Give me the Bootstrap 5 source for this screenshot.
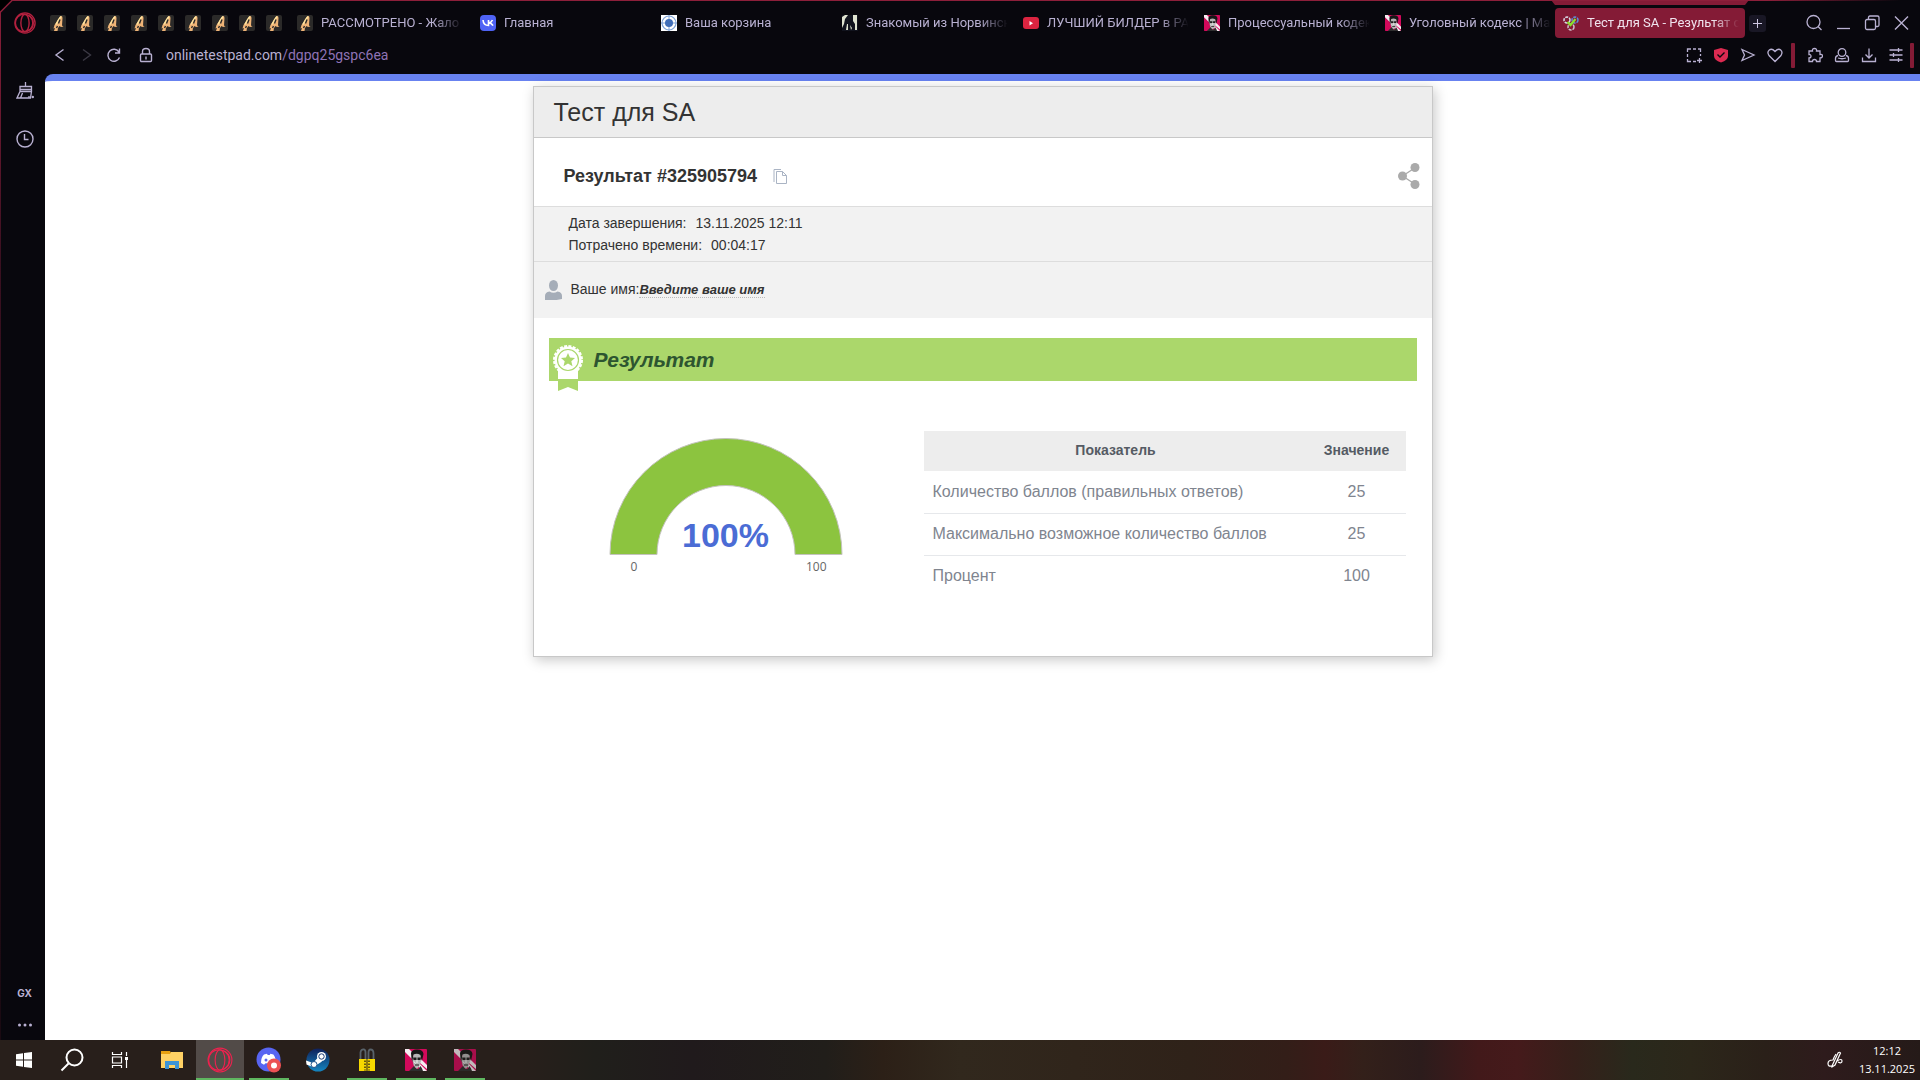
<!DOCTYPE html>
<html lang="ru">
<head>
<meta charset="utf-8">
<meta name="viewport" content="width=device-width, initial-scale=1">
<title>Тест для SA - Результат</title>
<link href="https://cdn.jsdelivr.net/npm/bootstrap@5.3.0/dist/css/bootstrap.min.css" rel="stylesheet">
<style>
  body { font-family: "Liberation Sans", Arial, sans-serif; background: #08070d; color: #333; overflow: hidden; }
  svg { display: block; flex: none; }
  a { text-decoration: none; color: inherit; }
  button { font: inherit; }
  .plain-btn { background: none; border: 0; padding: 0; color: inherit; }

  /* browser frame */
  .browser-frame { background: #08070d; color: #b9b1d2; font-family: Roboto, sans-serif; }
  .frame-line { inset: 0 0 auto 0; height: 1px; background: linear-gradient(90deg, #8d1f3a 92%, #08070d 99%); z-index: 3; }
  .frame-side { inset: 0 auto 40px 0; width: 1px; background: linear-gradient(#8d1f3a, #3a1020 25%, #1a0a12); z-index: 3; }
  .frame-corner { left: 0; top: 0; z-index: 4; }
  .opera-slot { width: 50px; }
  .tab-strip { height: 38px; padding-top: 8px; }
  .pin-tabs { gap: 11px; }
  .tab-item { flex: 0 1 181px; min-width: 0; height: 30px; gap: 8px; padding: 0 8px; }
  .tab-first { margin-left: 7px; flex-basis: 183px; }
  .tab-text { overflow: hidden; white-space: nowrap; -webkit-mask-image: linear-gradient(90deg, #000 112px, transparent 142px); mask-image: linear-gradient(90deg, #000 112px, transparent 142px); font-size: 13px; line-height: 20px; flex: 1 1 0; }
  .tab-active { flex-basis: 190px; background: #841b36; color: #f0e3ee; border-radius: 4px; margin-left: -3px; padding-right: 6px; }
  .tab-active .tab-text { -webkit-mask-image: linear-gradient(90deg, #000 126px, transparent 152px); mask-image: linear-gradient(90deg, #000 126px, transparent 152px); }
  .tab-notch { left: -4px; top: -8px; }
  .new-tab { width: 17px; height: 17px; background: #191725; border-radius: 3px; margin-left: 4px; }
  .win-btns { gap: 11px; padding-right: 10px; }
  .addr-row { height: 36px; padding: 0 6px 2px 52px; }
  .addr-text { font-size: 14px; line-height: 20px; }
  .addr-path { color: #8f73b5; }
  .nav-btns, .ext-btns { gap: 11px; }
  .ext-tools { margin: 0 6px 0 12px; }
  .ext-split { width: 4px; height: 25px; background: #841b36; border-radius: 1px; }
  .side-rail { width: 45px; padding: 8px 0 7px 4px; color: #b9b1d2; }
  .gx-text { font: 700 10px/16px Inter, sans-serif; }

  /* page */
  .site-view { background: #fff; border-top: 7px solid #6882f0; border-top-left-radius: 8px; padding-top: 5px; }
  .test-card { width: 900px; max-width: 100%; border: 1px solid #c8c8c8; box-shadow: 2px 3px 12px rgba(0,0,0,.22); background: #fff; }
  .test-head { background: #ededed; border-bottom: 1px solid #c8c8c8; padding: 0 20px; height: 51px; }
  .test-title { font-size: 25px; line-height: 50px; margin: 0; font-weight: 400; }
  .result-row { padding: 8px 12px 0 30px; height: 68px; }
  .result-num { font-size: 18px; line-height: 30px; font-weight: 700; margin: 0; }
  .info-band { background: #f2f2f2; border-top: 1px solid #ddd; font-size: 14px; line-height: 22px; padding: 5px 35px; }
  .info-val { margin-left: 9px; }
  .name-band { background: #f2f2f2; border-top: 1px solid #ddd; font-size: 14px; padding: 0 11px 1px; height: 57px; }
  .name-label { margin-left: 9px; }
  .name-input { border: 0; border-bottom: 1px dotted #bbb; background: none; padding: 0; width: 126px; font: italic 700 13px/16px "Liberation Sans", Arial, sans-serif; color: #333; height: 17px; }
  .name-input::placeholder { color: #333; opacity: 1; }
  .ribbon-bar { background: #abd76b; height: 43px; margin: 20px 15px 0; padding-left: 4px; color: #2d5530; }
  .ribbon-title { font: italic 700 21px/43px "Liberation Sans", Arial, sans-serif; margin: 0 0 0 11px; }
  .ribbon-icon { margin-top: 7px; }
  .result-body { padding: 50px 26px 59px 75px; }
  .gauge-box { margin-top: 5px; }
  .gauge-labels { font: 12px/16px "Open Sans", sans-serif; color: #666; width: 234px; padding: 3px 16px 0 22px; }
  .gauge-value { inset: auto 0 1px 0; font-size: 34px; line-height: 40px; font-weight: 700; color: #4b6cd5; text-align: center; }
  .score-table { width: 482px; color: #80858f; font-size: 16px; margin: 0; }
  .score-table th { background: #ededed; color: #555b64; font-size: 14px; line-height: 20px; height: 40px; padding: 0 7px 2px 9px; text-align: center; vertical-align: middle; border: 0; }
  .score-table td { height: 42px; padding: 0 7px 0 9px; vertical-align: middle; border-bottom: 1px solid #e6e8eb; line-height: 24px; }
  .score-table tbody tr:last-child td { border-bottom: 0; }
  .val-col { width: 100px; }

  /* taskbar */
  .task-bar { height: 40px; color: #fff; background: linear-gradient(90deg, #281f1b 0%, #281f1b 27%, #201f1b 31%, #201a1c 36%, #211e1a 43%, #2c2017 46%, #31281d 50%, #2f2219 62%, #331e18 67%, #3a1b18 69%, #33201a 71%, #2c1c1c 74%, #42191a 77%, #451a1b 79%, #35201a 82%, #29291c 85%, #2c271a 88%, #2a2019 92%, #2e1b1c 95%, #251a18 100%); }
  .task-btn { width: 48px; height: 40px; border: 0; padding: 0; background: none; display: flex; align-items: center; justify-content: center; }
  .task-btn.is-open { width: 40px; margin: 0 4px 0 5px; box-shadow: inset 0 -2px #5fb760; }
  .task-btn.is-front { background: #524b48; box-shadow: inset 0 -2px #5fb760; }
  .task-btn.is-pinned { margin-left: 1px; }
  .task-clock { font: 11px/18px "Open Sans", sans-serif; text-align: center; margin-right: 5px; }
</style>
</head>
<body>
<svg width="0" height="0" class="position-absolute" aria-hidden="true">
  <defs>
    <symbol id="i-opera" viewBox="0 0 24 24"><g fill="none" stroke="currentColor"><circle cx="12" cy="12" r="11"/><circle cx="11" cy="12" r="9.500"/><ellipse cx="12" cy="12" rx="4.500" ry="9.500"/><path d="M15 3.500a9 9 0 0 1 0 17"/></g></symbol>
    <symbol id="i-rocket" viewBox="0 0 16 16"><rect width="16" height="16" rx="2" fill="#2b2a29"/><path d="M10 1.500 12 1l.5 2-.5 7.500 1.500 1-2.500.5-1.500-1L8 13l-.5 3H4l1-3-1.500.5L4.500 10 6.500 7z" fill="#efb477"/><path d="M11 1.500 8.500 5 6 9.500" stroke="#ffe6a0" stroke-width="1.500" fill="none"/><path d="M10 4.500 8.500 8.500M7.500 11l-1 2" stroke="#2b2a29" stroke-width="1.400"/></symbol>
    <symbol id="i-face" viewBox="0 0 22 22"><rect width="22" height="22" rx="1" fill="#d3095b"/><path d="M0 0h4l4 4-1 6-7-7zM15 9l7 7v4l-7-6zM14 14l8 8h-5l-3-4z" fill="#f6ecf1"/><path d="M6 4q1-4 6.500-3.500Q18 .5 18.500 5L17 12l-1.500-5-7-1-.5 7-1.500-3z" fill="#161616"/><path d="M8.500 5.500q3.500-1.500 7 .5l.5 6-1.500 5-2 2.500h-2L8.500 16 7.500 11z" fill="#b5b5b5"/><path d="M8 8.500h3.500V11H8.500zM12.500 8.500H16l-.5 2.500h-3zM10 15.500h4v1h-4z" fill="#1c1c1c"/><path d="M4 22l3-3 2-2 2.500 3h2l2-3 1.500 2.500 1 2.500z" fill="#2e2e2e"/><path d="M12 11v3M9 12.500l1.500 2" stroke="#f2f2f2" fill="none"/></symbol>
  </defs>
</svg>

<div class="vh-100 d-flex flex-column position-relative">
  <div class="browser-frame">
    <div class="frame-line position-absolute"></div>
    <div class="frame-side position-absolute"></div>
    <svg class="frame-corner position-absolute" width="13" height="13"><path d="M0 0H12L0 12z" fill="#000"/><path d="M0 12.500 12.500 0" stroke="#8d1f3a" stroke-width="1.500"/></svg>
    <div class="tab-strip d-flex align-items-center">
      <button class="plain-btn opera-slot d-flex justify-content-center" aria-label="Меню"><svg width="22" height="22" color="#b3213f" stroke-width="1.500"><use href="#i-opera"/></svg></button>
      <div class="pin-tabs d-flex">
        <svg width="16" height="16"><use href="#i-rocket"/></svg><svg width="16" height="16"><use href="#i-rocket"/></svg><svg width="16" height="16"><use href="#i-rocket"/></svg><svg width="16" height="16"><use href="#i-rocket"/></svg><svg width="16" height="16"><use href="#i-rocket"/></svg><svg width="16" height="16"><use href="#i-rocket"/></svg><svg width="16" height="16"><use href="#i-rocket"/></svg><svg width="16" height="16"><use href="#i-rocket"/></svg><svg width="16" height="16"><use href="#i-rocket"/></svg>
      </div>
      <a href="#" class="tab-item tab-first d-flex align-items-center"><svg width="16" height="16"><use href="#i-rocket"/></svg><span class="tab-text">РАССМОТРЕНО - Жало</span></a>
      <a href="#" class="tab-item d-flex align-items-center"><svg width="16" height="16"><rect width="16" height="16" rx="4" fill="#4f63f5"/><path d="M3 5q.5 5.500 5.500 5.500V5M8.500 8q3-.5 4-3M8.500 8q3 0 4.500 2.700" fill="none" stroke="#fff" stroke-width="1.600"/></svg><span class="tab-text">Главная</span></a>
      <a href="#" class="tab-item d-flex align-items-center"><svg width="16" height="16"><rect width="16" height="16" fill="#fff"/><circle cx="8" cy="8" r="7" fill="none" stroke="#7fa3d8" stroke-width="1.200"/><path d="M8 0v16M0 8h16" stroke="#7fa3d8"/><circle cx="8" cy="8" r="4" fill="#3f6db8"/></svg><span class="tab-text">Ваша корзина</span></a>
      <a href="#" class="tab-item d-flex align-items-center"><svg width="16" height="16"><rect width="16" height="16" fill="#11131d"/><path d="M0 2 3 0h3L3 4 2 9 0 13zM11 0h4v15h-2V9l-2-3zM5 9h1v6H4zM8 10l2 3-1 2z" fill="#dfe3d0"/></svg><span class="tab-text">Знакомый из Норвинск</span></a>
      <a href="#" class="tab-item d-flex align-items-center"><svg width="16" height="16"><rect y="2" width="16" height="12" rx="3" fill="#dc2440"/><path d="M6.500 6v4.500L10 8.200z" fill="#fff"/></svg><span class="tab-text">ЛУЧШИЙ БИЛДЕР в РА</span></a>
      <a href="#" class="tab-item d-flex align-items-center"><svg width="16" height="16"><use href="#i-face"/></svg><span class="tab-text">Процессуальный кодек</span></a>
      <a href="#" class="tab-item d-flex align-items-center"><svg width="16" height="16"><use href="#i-face"/></svg><span class="tab-text">Уголовный кодекс | Ма</span></a>
      <a href="#" class="tab-item tab-active d-flex align-items-center position-relative"><svg class="tab-notch position-absolute" width="198" height="5"><path d="M0 0h198l-4 5H4z" fill="#841b36"/></svg><svg width="16" height="16"><g fill="none" stroke-width="1.500" stroke-dasharray="3 1"><circle cx="4" cy="5" r="3" stroke="#d7dde8"/><circle cx="12" cy="5" r="3" stroke="#5d8fd8"/><circle cx="8" cy="12" r="3" stroke="#cfc2cf"/></g><path d="M4.500 7 7.500 10 12.500 4" stroke="#8be02c" stroke-width="2.200" fill="none"/></svg><span class="tab-text">Тест для SA - Результат с</span></a>
      <button class="plain-btn new-tab d-flex align-items-center justify-content-center" aria-label="Новая вкладка"><svg width="11" height="11"><path d="M5.500 1v9M1 5.500h9" stroke="#cfc8e4"/></svg></button>
      <div class="win-btns d-flex ms-auto">
        <button class="plain-btn" aria-label="Поиск"><svg width="18" height="18" fill="none" stroke="currentColor" stroke-width="1.300"><circle cx="8.500" cy="8" r="6.500"/><path d="m13 12.500 3.500 3.500"/></svg></button>
        <button class="plain-btn" aria-label="Свернуть"><svg width="18" height="18" stroke="currentColor" stroke-width="1.300"><path d="M3 14.500h13"/></svg></button>
        <button class="plain-btn" aria-label="Развернуть"><svg width="18" height="18" fill="none" stroke="currentColor" stroke-width="1.300"><rect x="2.500" y="5.500" width="10" height="10" rx="1.500"/><path d="M5.500 5.500v-2q0-1.500 1.500-1.500h7.500q1.500 0 1.500 1.500V11q0 1.500-1.500 1.500h-2"/></svg></button>
        <button class="plain-btn" aria-label="Закрыть"><svg width="18" height="18" stroke="currentColor" stroke-width="1.400"><path d="m3 2.500 13 13m0-13-13 13"/></svg></button>
      </div>
    </div>
    <div class="addr-row d-flex align-items-center">
      <div class="nav-btns d-flex">
        <button class="plain-btn" aria-label="Назад"><svg width="16" height="16" fill="none" stroke="currentColor" stroke-width="1.400"><path d="M11.500 2.500 4 8l7.500 5.500"/></svg></button>
        <button class="plain-btn" aria-label="Вперёд"><svg width="16" height="16" fill="none" stroke="#3b3944" stroke-width="1.400"><path d="M4 2.500 11.500 8 4 13.500"/></svg></button>
        <button class="plain-btn" aria-label="Обновить"><svg width="16" height="16" fill="none" stroke="currentColor" stroke-width="1.400"><path d="M13.500 10.500A6 6 0 1 1 13 5M13.500 1.500V6H9"/></svg></button>
      </div>
      <svg class="ms-3" width="16" height="16" fill="none" stroke="currentColor" stroke-width="1.400"><rect x="2.500" y="7" width="11" height="7.500" rx="1"/><path d="M4.500 7V4.500Q4.500 1.500 8 1.500t3.500 3V7M8 9.500v3"/></svg>
      <span class="addr-text ms-2 ps-1">onlinetestpad.com<span class="addr-path">/dgpq25gspc6ea</span></span>
      <div class="ext-btns d-flex ms-auto">
        <button class="plain-btn" aria-label="Снимок"><svg width="16" height="16" fill="none" stroke="currentColor" stroke-width="1.300"><path d="M1.500 5V2H5M7 2h3M12 2h2.500v3M14.500 7v2M1.500 7v3M1.500 12v2.500H5M7 14.500h3M11 13.500h5M13.500 11v5"/></svg></button>
        <button class="plain-btn" aria-label="Защита"><svg width="16" height="16"><path d="M1 3 8 1l7 2v6q0 4-7 6.500Q1 13 1 9z" fill="#dd2a51"/><path d="m4.500 7.500 2.500 2.500 4.500-4.500" fill="none" stroke="#08070d" stroke-width="1.400"/></svg></button>
        <button class="plain-btn" aria-label="Отправить"><svg width="16" height="16" fill="none" stroke="currentColor" stroke-width="1.300"><path d="M2 2.500 14 8 2 13.500 4.500 8z"/></svg></button>
        <button class="plain-btn" aria-label="Избранное"><svg width="16" height="16" fill="none" stroke="currentColor" stroke-width="1.300"><path d="M8 14.500 2 8.500Q-.3 5 2.300 3T8 4.500Q11.300 1 13.700 3T14 8.500z"/></svg></button>
      </div>
      <div class="ext-split ms-2"></div>
      <div class="ext-btns ext-tools d-flex">
        <button class="plain-btn" aria-label="Расширения"><svg width="16" height="16" fill="none" stroke="currentColor" stroke-width="1.300"><path d="M2 4h3.500Q5 1.500 7.500 1.500T9.500 4H13v3.500q2.500-.5 2.500 1.500T13 11v3.500H9.500q0-2-2-2t-2 2H2V11q2 0 2-1.800T2 7.500z"/></svg></button>
        <button class="plain-btn" aria-label="Профиль"><svg width="16" height="16" fill="none" stroke="currentColor" stroke-width="1.300"><circle cx="8" cy="5.500" r="3.800"/><path d="M4 8.500q-2.500.5-2.500 3v2q0 1 1 1h11q1 0 1-1v-2q0-2.500-2.500-3M4 11q4 1.500 8 0"/></svg></button>
        <button class="plain-btn" aria-label="Загрузки"><svg width="16" height="16" fill="none" stroke="currentColor" stroke-width="1.300"><path d="M8 1.500v9M4.500 7.500 8 11l3.500-3.500M1.500 10.500v4h13v-4"/></svg></button>
        <button class="plain-btn" aria-label="Настройка"><svg width="16" height="16" fill="none" stroke="currentColor" stroke-width="1.300"><path d="M1.500 3h13M1.500 8h13M1.500 13h13M10.500 1v4M5.500 6v4M10.500 11v4"/></svg></button>
      </div>
      <div class="ext-split"></div>
    </div>
  </div>

  <div class="d-flex flex-grow-1">
    <nav class="side-rail d-flex flex-column align-items-center">
      <svg width="18" height="18" fill="none" stroke="currentColor" stroke-width="1.300"><path d="M9.500 0v4M4 4.500h11.500v5H4zM4 7.500h11.500M4 9.500 1 16h13.500l1-6.500M6.500 11l-2 5M13 14v2"/><circle cx="16.800" cy="15" r="1.200" fill="currentColor" stroke="none"/></svg>
      <svg class="mt-4" width="18" height="30" fill="none" stroke="currentColor" stroke-width="1.400"><circle cx="9" cy="15" r="8"/><path d="M8.500 10v5.500h4"/></svg>
      <span class="gx-text mt-auto">GX</span>
      <svg class="mt-3" width="16" height="16" fill="currentColor"><circle cx="2.500" cy="8" r="1.500"/><circle cx="8" cy="8" r="1.500"/><circle cx="13.500" cy="8" r="1.500"/></svg>
    </nav>
    <main class="site-view flex-grow-1">
      <div class="test-card mx-auto">
        <header class="test-head"><h1 class="test-title">Тест для SA</h1></header>
        <div class="result-row d-flex align-items-center">
          <h2 class="result-num">Результат #325905794</h2>
          <button class="plain-btn ms-3" aria-label="Копировать"><svg width="14" height="16" fill="none" stroke="#aab4c4"><path d="M3.500 3.500h6l4 4v8h-10zM9.500 3.500v4h4M1 14V1.500h7"/></svg></button>
          <button class="plain-btn ms-auto" aria-label="Поделиться"><svg width="22" height="28"><path d="M17.500 5.500 4.500 14l13 8.500" fill="none" stroke="#aaa" stroke-width="1.300"/><g fill="#aaa"><circle cx="17" cy="5.500" r="4.500"/><circle cx="4.500" cy="14" r="4.500"/><circle cx="17" cy="22.500" r="4.500"/></g></svg></button>
        </div>
        <div class="info-band">
          <div>Дата завершения:<span class="info-val">13.11.2025 12:11</span></div>
          <div>Потрачено времени:<span class="info-val">00:04:17</span></div>
        </div>
        <div class="name-band d-flex align-items-center">
          <svg width="17" height="20" fill="#a5adb8"><ellipse cx="8.500" cy="5.500" rx="4.500" ry="5.500"/><path d="M0 20v-4q0-4 4.500-4.500 4 2.500 8 0Q17 12 17 16v3q-8 2-17 1z"/></svg>
          <label class="name-label" for="userName">Ваше имя:</label>
          <input class="name-input" id="userName" type="text" placeholder="Введите ваше имя">
        </div>
        <div class="ribbon-bar d-flex align-items-start">
          <svg class="ribbon-icon" width="30" height="46"><path d="M5 24h20v10H5z" fill="#fff"/><path d="M5 36h20v10l-10-4-10 4z" fill="#abd76b"/><circle cx="15" cy="15" r="13.500" fill="#fff"/><circle cx="15" cy="15" r="14" fill="none" stroke="#fff" stroke-width="2" stroke-dasharray="3 1.400"/><circle cx="15" cy="15" r="10.500" fill="none" stroke="#abd76b" stroke-width="1.200"/><path d="m15 8 2 4.500 5 .5-3.700 3.300 1.200 5L15 18.600l-4.500 2.700 1.200-5L8 13l5-.5z" fill="#abd76b"/></svg>
          <h3 class="ribbon-title">Результат</h3>
        </div>
        <div class="result-body d-flex justify-content-between">
          <div class="gauge-box">
            <div class="position-relative">
              <svg width="234" height="120"><path d="M1 118.500A116 116 0 0 1 233 118.500H186A69 69 0 0 0 48 118.500z" fill="#8cc43f" stroke="#c3c3bd"/></svg>
              <div class="gauge-value position-absolute">100%</div>
            </div>
            <div class="gauge-labels d-flex justify-content-between"><span>0</span><span>100</span></div>
          </div>
          <table class="score-table">
            <thead><tr><th scope="col">Показатель</th><th scope="col" class="val-col">Значение</th></tr></thead>
            <tbody>
              <tr><td>Количество баллов (правильных ответов)</td><td class="text-center">25</td></tr>
              <tr><td>Максимально возможное количество баллов</td><td class="text-center">25</td></tr>
              <tr><td>Процент</td><td class="text-center">100</td></tr>
            </tbody>
          </table>
        </div>
      </div>
    </main>
  </div>

  <footer class="task-bar d-flex align-items-center">
    <button class="task-btn" aria-label="Пуск"><svg width="16" height="16" fill="#fff"><path d="M0 2.300 7 1.200v6.300H0zM8 1l8-1v7.500H8zM0 8.500h7v6.300L0 13.700zM8 8.500h8V16l-8-1z"/></svg></button>
    <button class="task-btn" aria-label="Поиск"><svg width="24" height="24" fill="none" stroke="#fff" stroke-width="2"><circle cx="14.500" cy="9.500" r="8"/><path d="M8.500 15.500 1.500 22.500"/></svg></button>
    <button class="task-btn" aria-label="Представление задач"><svg width="18" height="16" fill="none" stroke="#fff" stroke-width="1.200"><path d="M1.500 0v2.500h9V0M1.500 16v-2.500h9V16M1.500 5h9v6h-9zM15.500 0v4M15.500 8v8"/><path d="M14 5h3v3h-3z" fill="#fff" stroke="none"/></svg></button>
    <button class="task-btn ms-1" aria-label="Проводник"><svg width="22" height="20"><path d="M0 1h9l1 2v3H0z" fill="#e8a011"/><path d="M0 4h9l1-2h12v16H0z" fill="#ffd164"/><path d="M4 19v-8h14v8h-4v-4H8v4z" fill="#3d94d6"/></svg></button>
    <button class="task-btn is-front" aria-label="Opera GX"><svg width="26" height="26" color="#f0214f"><use href="#i-opera"/></svg></button>
    <button class="task-btn is-open" aria-label="Discord"><svg width="26" height="26"><circle cx="12.500" cy="12.500" r="12" fill="#5865f2"/><path d="M5 16q0-6 3-8.500l3-.8.7 1.300h2l.7-1.300 3 .8q2.500 3 2.500 8.500l-3 1.800-1.500-1.600H9.500L8 17.800z" fill="#fff"/><circle cx="10" cy="13" r="1.500" fill="#5865f2"/><circle cx="18" cy="18.500" r="7" fill="#ec5254"/><circle cx="18" cy="18.500" r="3" fill="#fff"/></svg></button>
    <button class="task-btn is-pinned" aria-label="Steam"><svg width="24" height="24"><defs><linearGradient id="stm" x2="0" y2="1"><stop stop-color="#10205a"/><stop offset="1" stop-color="#1485c0"/></linearGradient></defs><circle cx="12" cy="12" r="11.500" fill="url(#stm)"/><path d="M0 12.500 7 15l5-5.500 4 4-5.500 3.500-2.500 2.500-7.500-3z" fill="#fff"/><circle cx="15.500" cy="8.500" r="4.500" fill="#fff"/><circle cx="15.500" cy="8.500" r="2.700" fill="#fff" stroke="#1a3a73"/><circle cx="8" cy="16.500" r="3" fill="#fff" stroke="#1a4f88"/></svg></button>
    <button class="task-btn is-open" aria-label="Замки"><svg width="18" height="24"><path d="M2.500 12V4.500Q3 1 6 1.500q1.500.3 1.500 3V12M10.500 12V4.500q0-3 2-3 3 0 3 4V12" fill="none" stroke="#59636b" stroke-width="1.800"/><path d="M1 11h7.500v12H1zM9.500 11H17v12H9.500z" fill="#f7d900"/><path d="M7 12.500v10M11 12.500v10" stroke="#3b3410" stroke-width="1.500" stroke-dasharray="1.500 1.500"/></svg></button>
    <button class="task-btn is-open" aria-label="Игра"><svg width="22" height="22"><use href="#i-face"/></svg></button>
    <button class="task-btn is-open" aria-label="Игра"><svg class="opacity-75" width="22" height="22"><use href="#i-face"/></svg></button>
    <svg class="ms-auto me-3" width="16" height="18" fill="none" stroke="#fff" stroke-width="1.200"><path d="M5 15 11 2q1.500-1.500 2.500 0L8 14l-3 2zM9 3Q7 6 6 9 1 9 1 12.500T5 15M10 10q5-3 5 0t-4 1"/></svg>
    <div class="task-clock"><div>12:12</div><div>13.11.2025</div></div>
  </footer>
</div>
<script src="https://cdn.jsdelivr.net/npm/bootstrap@5.3.0/dist/js/bootstrap.bundle.min.js"></script>
</body>
</html>
